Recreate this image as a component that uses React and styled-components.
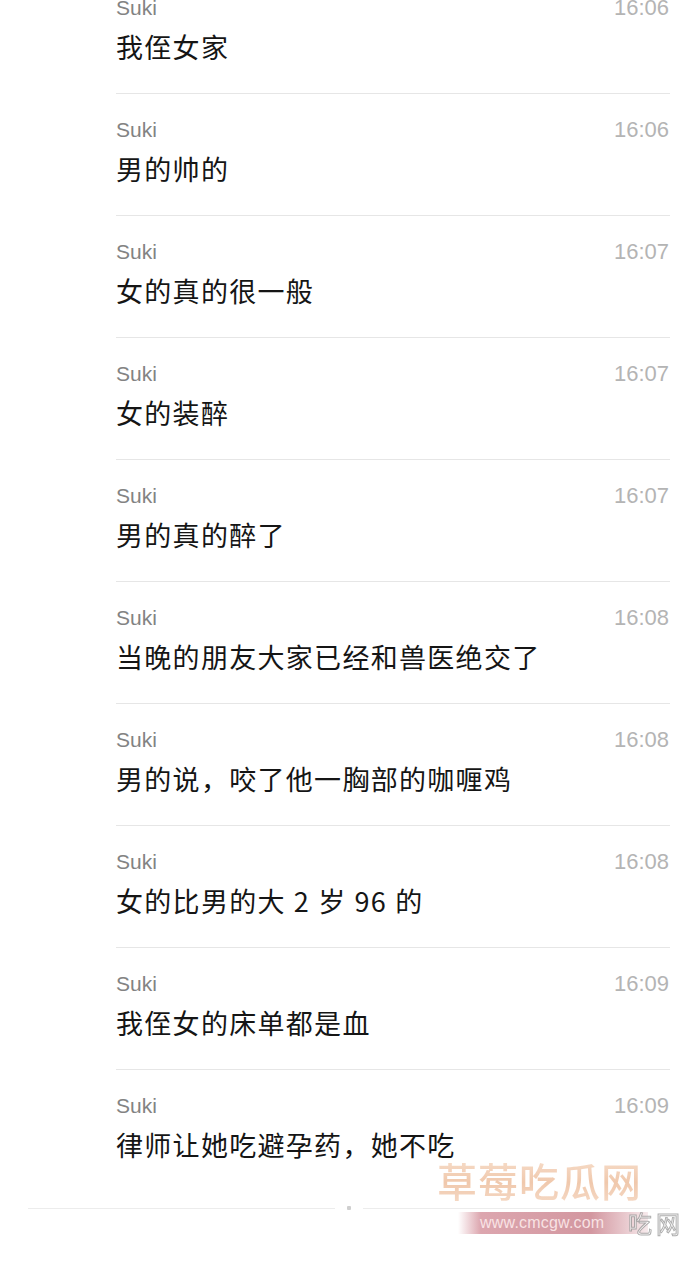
import React from "react";
import styled, { createGlobalStyle } from "styled-components";

const Global = createGlobalStyle`
  html, body { margin: 0; padding: 0; background: #fff; }
  body { width: 685px; height: 1280px; overflow: hidden; }
  #root { width: 685px; }
`;

const Page = styled.div`
  position: relative;
  width: 685px;
  height: 1280px;
  overflow: hidden;
  background: #fff;
`;

const List = styled.div`
  margin-top: -28px;
  padding-left: 116px;
  padding-right: 15px;
  display: flex;
  flex-direction: column;
`;

const Row = styled.div`
  box-sizing: content-box;
  height: 97px;
  padding-top: 24px;
  border-bottom: 1px solid ${(p) => (p.$last ? "transparent" : "#e6e6e6")};
  display: flex;
  flex-direction: column;
`;

const Head = styled.div`
  display: flex;
  justify-content: space-between;
  align-items: baseline;
  height: 24px;
  line-height: 24px;
`;

const Name = styled.span`
  font-family: "Liberation Sans", Arial, sans-serif;
  font-size: 21px;
  color: #838383;
`;

const Time = styled.span`
  font-family: "Liberation Sans", Arial, sans-serif;
  font-size: 22px;
  color: #b4b4b4;
  margin-right: 1px;
`;

const Msg = styled.div`
  margin-top: 9px;
  font-family: "Noto Sans CJK SC", "Liberation Sans", sans-serif;
  font-size: 27px;
  letter-spacing: 1.3px;
  line-height: 36px;
  color: #151515;
`;

const Footer = styled.div`
  display: flex;
  align-items: center;
  margin-top: 14px;
  padding: 0 15px 0 28px;
  gap: 12px;
`;

const Rule = styled.div`
  flex: 1;
  height: 1px;
  background: #ececec;
`;

const Dot = styled.div`
  width: 4px;
  height: 4px;
  border-radius: 1px;
  background: #cfcfcf;
`;

const Mark = styled.div`
  position: absolute;
  left: 437px;
  top: 1156px;
  font-family: "Noto Sans CJK SC", sans-serif;
  font-size: 40px;
  letter-spacing: 1px;
  font-weight: 500;
  line-height: 48px;
  color: #f1cdb4;
  background: linear-gradient(180deg, #f6dcc8 0%, #efc3a4 55%, #f4d6c0 100%);
  -webkit-background-clip: text;
  background-clip: text;
  -webkit-text-fill-color: transparent;
  opacity: 0.9;
`;

const Band = styled.div`
  position: absolute;
  left: 458px;
  top: 1212px;
  width: 190px;
  height: 22px;
  background: linear-gradient(90deg, rgba(214,150,160,0) 0%, rgba(214,150,160,0.85) 12%, rgba(206,140,150,0.9) 70%, rgba(214,150,160,0.2) 100%);
  display: flex;
  align-items: center;
  padding-left: 22px;
  box-sizing: border-box;
`;

const BandText = styled.span`
  font-family: "Liberation Sans", Arial, sans-serif;
  font-size: 16px;
  color: rgba(255, 240, 240, 0.85);
  letter-spacing: 0.2px;
`;

const Ghost = styled.span`
  position: absolute;
  left: 628px;
  top: 1208px;
  font-family: "Noto Sans CJK SC", sans-serif;
  font-size: 24px;
  line-height: 30px;
  color: #fff;
  -webkit-text-stroke: 1px #9a9a9a;
  opacity: 0.8;
  letter-spacing: 4px;
`;

const rows = [
  ["16:06", "我侄女家"],
  ["16:06", "男的帅的"],
  ["16:07", "女的真的很一般"],
  ["16:07", "女的装醉"],
  ["16:07", "男的真的醉了"],
  ["16:08", "当晚的朋友大家已经和兽医绝交了"],
  ["16:08", "男的说，咬了他一胸部的咖喱鸡"],
  ["16:08", "女的比男的大\u20052\u2005岁\u200596\u2005的"],
  ["16:09", "我侄女的床单都是血"],
  ["16:09", "律师让她吃避孕药，她不吃"],
];

export default function App() {
  return (
    <>
      <Global />
      <Page>
        <List>
          {rows.map(([t, m], i) => (
            <Row key={i} $last={i === rows.length - 1}>
              <Head>
                <Name>Suki</Name>
                <Time>{t}</Time>
              </Head>
              <Msg>{m}</Msg>
            </Row>
          ))}
        </List>
        <Footer>
          <Rule />
          <Dot />
          <Rule />
        </Footer>
        <Mark>草莓吃瓜网</Mark>
        <Band>
          <BandText>www.cmcgw.com</BandText>
        </Band>
        <Ghost>吃网</Ghost>
      </Page>
    </>
  );
}
